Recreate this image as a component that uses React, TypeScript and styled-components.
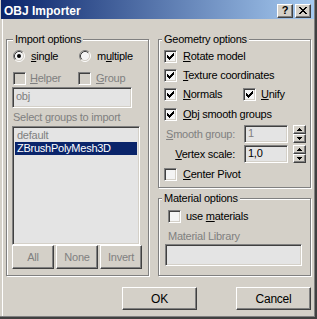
import React from 'react'
import styled, {createGlobalStyle} from 'styled-components'

const face = '#d4d0c8'
const shadow = '#808080'
const dark = '#404040'
const field = '#e4e4e4'
const navy = '#0a246a'

const GlobalStyle = createGlobalStyle`
  html, body {
    margin: 0;
    padding: 0;
    background: ${face};
  }
  body {
    font-family: "Liberation Sans", Arial, sans-serif;
    font-size: 11px;
    letter-spacing: -0.25px;
    color: #000;
  }
`

const Window = styled.div`
  width: 317px;
  height: 319px;
  box-sizing: border-box;
  border-right: 2px solid ${dark};
  border-bottom: 2px solid ${dark};
  background: ${face};
  overflow: hidden;
`

const Frame = styled.div`
  height: 100%;
  box-sizing: border-box;
  border-right: 1px solid ${shadow};
  border-bottom: 1px solid ${shadow};
  display: flex;
  flex-direction: column;
`

const TitleBar = styled.div`
  flex: none;
  height: 19px;
  margin-left: 1px;
  padding: 0 3px;
  display: flex;
  align-items: flex-start;
  background: linear-gradient(to right, ${navy}, #a6caf0);
`

const Title = styled.div`
  flex: 1;
  margin-top: 5px;
  color: #fff;
  font-weight: bold;
  font-size: 12px;
  line-height: 13px;
  letter-spacing: 0;
`

const raised = `
  box-sizing: border-box;
  background: ${face};
  border-top: 1px solid #fff;
  border-left: 1px solid #fff;
  border-right: 1px solid ${dark};
  border-bottom: 1px solid ${dark};
  box-shadow: inset -1px -1px 0 ${shadow};
`

const sunken = `
  box-sizing: border-box;
  border-top: 1px solid ${shadow};
  border-left: 1px solid ${shadow};
  border-right: 1px solid #fff;
  border-bottom: 1px solid #fff;
  box-shadow: inset 1px 1px 0 ${dark}, inset -1px -1px 0 ${face};
`

const CaptionButton = styled.div<{$gap?: number}>`
  ${raised}
  width: 16px;
  height: 14px;
  margin-top: 4px;
  margin-left: ${p => p.$gap || 0}px;
  display: flex;
  align-items: center;
  justify-content: center;
  font-weight: bold;
  font-size: 11px;
  line-height: 11px;
  padding: 0 0 1px 0;
`

const Body = styled.div`
  flex: 1;
  margin-left: 2px;
  border-left: 1px solid #fff;
  padding: 20px 3px 0 3px;
  display: flex;
  flex-direction: column;
`

const Columns = styled.div`
  display: flex;
  gap: 9px;
`

const Column = styled.div`
  display: flex;
  flex-direction: column;
  gap: 10px;
`

const Group = styled.div<{$w: number; $h: number; $pad: string}>`
  position: relative;
  box-sizing: border-box;
  width: ${p => p.$w}px;
  height: ${p => p.$h}px;
  border: 1px solid ${shadow};
  box-shadow: inset 1px 1px 0 #fff, 1px 1px 0 #fff;
  padding: ${p => p.$pad};
  display: flex;
  flex-direction: column;
  align-items: flex-start;
`

const Legend = styled.span<{$indent: number}>`
  position: absolute;
  top: -7px;
  left: ${p => p.$indent}px;
  padding: 0 2px;
  line-height: 13px;
  background: ${face};
`

const Row = styled.div<{$h: number; $top?: number; $left?: number}>`
  display: flex;
  align-items: center;
  height: ${p => p.$h}px;
  margin-top: ${p => p.$top || 0}px;
  margin-left: ${p => p.$left || 0}px;
`

const Option = styled.label<{$w?: number; $gap: number; $disabled?: boolean}>`
  display: flex;
  align-items: center;
  gap: ${p => p.$gap}px;
  width: ${p => (p.$w ? `${p.$w}px` : 'auto')};
  color: ${p => (p.$disabled ? shadow : '#000')};
  line-height: 13px;
  white-space: nowrap;
`

const Caption = styled.div<{$top: number; $left: number}>`
  margin-top: ${p => p.$top}px;
  margin-left: ${p => p.$left}px;
  line-height: 13px;
  color: ${shadow};
`

const Edit = styled.div<{$w: number; $h: number; $top?: number; $left?: number; $disabled?: boolean}>`
  ${sunken}
  width: ${p => p.$w}px;
  height: ${p => p.$h}px;
  margin-top: ${p => p.$top || 0}px;
  margin-left: ${p => p.$left || 0}px;
  padding: 0 3px;
  line-height: ${p => p.$h - 4}px;
  background: ${field};
  color: ${p => (p.$disabled ? shadow : '#000')};
`

const BoxFrame = styled.span<{$disabled?: boolean}>`
  ${sunken}
  width: 13px;
  height: 13px;
  flex: none;
  display: flex;
  align-items: center;
  justify-content: center;
  background: ${p => (p.$disabled ? face : '#f4f4f4')};
`

const ListBox = styled.div`
  ${sunken}
  width: 128px;
  height: 119px;
  margin-top: 2px;
  padding: 2px;
  background: ${field};
`

const ListItem = styled.div<{$selected?: boolean}>`
  height: 13px;
  line-height: 13px;
  padding-left: 2px;
  background: ${p => (p.$selected ? navy : 'transparent')};
  color: ${p => (p.$selected ? '#fff' : shadow)};
`

const ButtonRow = styled.div<{$gap: number; $top: number; $end?: boolean}>`
  display: flex;
  gap: ${p => p.$gap}px;
  margin-top: ${p => p.$top}px;
  justify-content: ${p => (p.$end ? 'flex-end' : 'flex-start')};
`

const PushButton = styled.div<{$w: number; $h: number; $disabled?: boolean}>`
  ${raised}
  width: ${p => p.$w}px;
  height: ${p => p.$h}px;
  display: flex;
  align-items: center;
  justify-content: center;
  color: ${p => (p.$disabled ? shadow : '#000')};
  font-size: ${p => (p.$h > 23 ? 11 : 12)}px;
`

const SpinLabel = styled.span<{$disabled?: boolean}>`
  width: 71px;
  text-align: right;
  margin-right: 9px;
  color: ${p => (p.$disabled ? shadow : '#000')};
  line-height: 13px;
`

const Spinner = styled.div`
  width: 13px;
  height: 18px;
  margin-left: 5px;
  display: flex;
  flex-direction: column;
`

const SpinHalf = styled.div`
  ${raised}
  flex: 1;
  display: flex;
  align-items: center;
  justify-content: center;
`

function CheckMark() {
  return (
    <svg width="7" height="7" viewBox="0 0 7 7" shapeRendering="crispEdges">
      <path
        d="M6 0h1v1h-1zM5 1h2v1h-2zM0 2h1v1h-1zM4 2h3v1h-3zM0 3h2v1h-2zM3 3h3v1h-3zM0 4h5v1h-5zM1 5h3v1h-3zM2 6h1v1h-1z"
        fill="#000"
      />
    </svg>
  )
}

function CheckBox({checked, disabled}: {checked?: boolean; disabled?: boolean}) {
  return <BoxFrame $disabled={disabled}>{checked && <CheckMark />}</BoxFrame>
}

function Radio({checked}: {checked?: boolean}) {
  return (
    <svg width="12" height="12" viewBox="0 0 12 12" style={{flex: 'none'}}>
      <circle cx="6" cy="6" r="4.5" fill="#f4f4f4" />
      <path d="M2.11 9.89A5.5 5.5 0 0 1 9.89 2.11" stroke={shadow} fill="none" />
      <path d="M9.89 2.11A5.5 5.5 0 0 1 2.11 9.89" stroke="#fff" fill="none" />
      <path d="M2.82 9.18A4.5 4.5 0 0 1 9.18 2.82" stroke={dark} fill="none" />
      <path d="M9.18 2.82A4.5 4.5 0 0 1 2.82 9.18" stroke={face} fill="none" />
      {checked && <circle cx="6" cy="6" r="2" fill="#000" />}
    </svg>
  )
}

function Arrow({down}: {down?: boolean}) {
  return (
    <svg width="5" height="3" viewBox="0 0 5 3" shapeRendering="crispEdges">
      <path d={down ? 'M0 0h5L2.5 3z' : 'M2.5 0L5 3H0z'} fill="#000" />
    </svg>
  )
}

function SpinButtons() {
  return (
    <Spinner>
      <SpinHalf>
        <Arrow />
      </SpinHalf>
      <SpinHalf>
        <Arrow down />
      </SpinHalf>
    </Spinner>
  )
}

function CloseGlyph() {
  return (
    <svg width="8" height="7" viewBox="0 0 8 7" shapeRendering="crispEdges">
      <path
        d="M0 0h2v1h-2zM6 0h2v1h-2zM1 1h2v1h-2zM5 1h2v1h-2zM2 2h4v1h-4zM3 3h2v1h-2zM2 4h4v1h-4zM1 5h2v1h-2zM5 5h2v1h-2zM0 6h2v1h-2zM6 6h2v1h-2z"
        fill="#000"
      />
    </svg>
  )
}

export default function App() {
  return (
    <>
      <GlobalStyle />
      <Window>
        <Frame>
          <TitleBar>
            <Title>OBJ Importer</Title>
            <CaptionButton>?</CaptionButton>
            <CaptionButton $gap={2}>
              <CloseGlyph />
            </CaptionButton>
          </TitleBar>
          <Body>
            <Columns>
              <Group $w={143} $h={237} $pad="8px 0 0 5px">
                <Legend $indent={6}>Import options</Legend>
                <Row $h={16} $left={1}>
                  <Option $w={66} $gap={6}>
                    <Radio checked />
                    <span><u>s</u>ingle</span>
                  </Option>
                  <Option $gap={6}>
                    <Radio />
                    <span>m<u>u</u>ltiple</span>
                  </Option>
                </Row>
                <Row $h={16} $top={6} $left={1}>
                  <Option $w={65} $gap={4} $disabled>
                    <CheckBox disabled />
                    <span><u>H</u>elper</span>
                  </Option>
                  <Option $gap={5} $disabled>
                    <CheckBox disabled />
                    <span><u>G</u>roup</span>
                  </Option>
                </Row>
                <Edit $w={120} $h={21} $top={1} $disabled>obj</Edit>
                <Caption $top={3} $left={1}>Select groups to import</Caption>
                <ListBox>
                  <ListItem>default</ListItem>
                  <ListItem $selected>ZBrushPolyMesh3D</ListItem>
                </ListBox>
                <ButtonRow $gap={2} $top={0}>
                  <PushButton $w={42} $h={24} $disabled>All</PushButton>
                  <PushButton $w={42} $h={24} $disabled>None</PushButton>
                  <PushButton $w={42} $h={24} $disabled>Invert</PushButton>
                </ButtonRow>
              </Group>
              <Column>
                <Group $w={153} $h={149} $pad="7px 0 0 5px">
                  <Legend $indent={3}>Geometry options</Legend>
                  <Row $h={19}>
                    <Option $gap={6}>
                      <CheckBox checked />
                      <span><u>R</u>otate model</span>
                    </Option>
                  </Row>
                  <Row $h={19}>
                    <Option $gap={6}>
                      <CheckBox checked />
                      <span><u>T</u>exture coordinates</span>
                    </Option>
                  </Row>
                  <Row $h={19}>
                    <Option $w={79} $gap={6}>
                      <CheckBox checked />
                      <span><u>N</u>ormals</span>
                    </Option>
                    <Option $gap={5}>
                      <CheckBox checked />
                      <span><u>U</u>nify</span>
                    </Option>
                  </Row>
                  <Row $h={19} $top={1}>
                    <Option $gap={6}>
                      <CheckBox checked />
                      <span><u>O</u>bj smooth groups</span>
                    </Option>
                  </Row>
                  <Row $h={18} $top={1}>
                    <SpinLabel $disabled><u>S</u>mooth group:</SpinLabel>
                    <Edit $w={44} $h={18} $disabled>1</Edit>
                    <SpinButtons />
                  </Row>
                  <Row $h={18} $top={2}>
                    <SpinLabel><u>V</u>ertex scale:</SpinLabel>
                    <Edit $w={44} $h={18}>1,0</Edit>
                    <SpinButtons />
                  </Row>
                  <Row $h={19} $top={2}>
                    <Option $gap={6}>
                      <CheckBox />
                      <span><u>C</u>enter Pivot</span>
                    </Option>
                  </Row>
                </Group>
                <Group $w={153} $h={78} $pad="8px 0 0 5px">
                  <Legend $indent={3}>Material options</Legend>
                  <Row $h={19} $left={4}>
                    <Option $gap={5}>
                      <CheckBox />
                      <span>use <u>m</u>aterials</span>
                    </Option>
                  </Row>
                  <Caption $top={4} $left={4}>Material Library</Caption>
                  <Edit $w={137} $h={22} $top={1} $left={1} />
                </Group>
              </Column>
            </Columns>
            <ButtonRow $gap={39} $top={11} $end>
              <PushButton $w={75} $h={23}>OK</PushButton>
              <PushButton $w={75} $h={23}>Cancel</PushButton>
            </ButtonRow>
          </Body>
        </Frame>
      </Window>
    </>
  )
}
